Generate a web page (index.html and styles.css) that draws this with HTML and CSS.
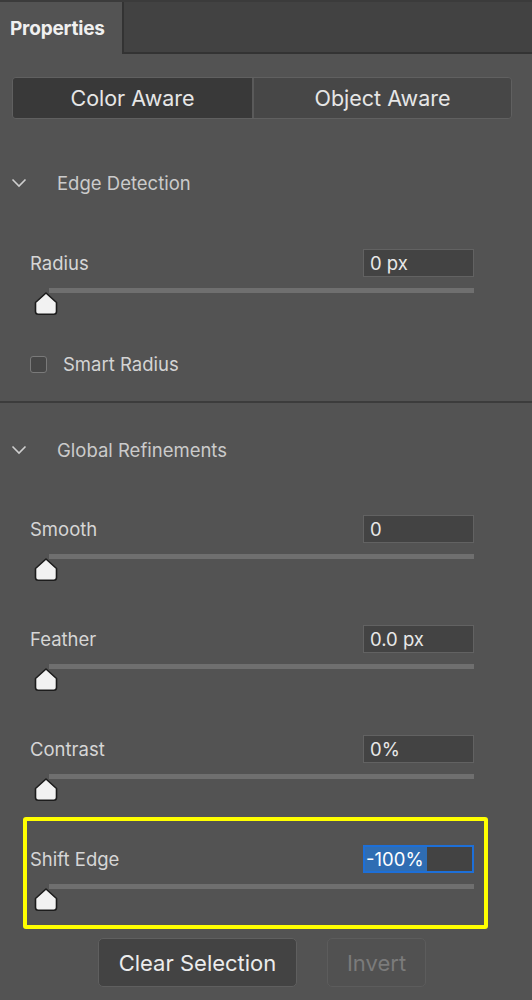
FILE: index.html
```html
<!DOCTYPE html>
<html lang="en">

<head>
  <meta charset="UTF-8" />
  <meta name="viewport" content="width=device-width, initial-scale=1" />
  <title>Properties</title>
  <link rel="stylesheet" href="styles.css">
</head>

<body>
  <div class="tab-bar">
    <div class="tab">Properties</div>
    <div class="tab-rest"></div>
  </div>

  <div class="segmented">
    <button class="segment active">Color Aware</button>
    <button class="segment">Object Aware</button>
  </div>

  <!-- Edge Detection -->
  <div class="section-head section-first">
    <svg class="chevron" width="16" height="10" viewBox="0 0 16 10">
      <path d="M1.5 1.5 L8 8 L14.5 1.5" fill="none" stroke="#cfcfcf" stroke-width="1.6" />
    </svg>
    <span>Edge Detection</span>
  </div>

  <div class="field field-first">
    <div class="field-head">
      <label>Radius</label>
      <div class="value">0 px</div>
    </div>
    <div class="track"></div>
    <svg class="thumb" width="24" height="24" viewBox="0 0 24 24">
      <path d="M12 2 L22.5 11.5 L22.5 20.5 Q22.5 23.2 19.8 23.2 L4.2 23.2 Q1.5 23.2 1.5 20.5 L1.5 11.5 Z" fill="#f2f2f2" stroke="#1c1c1c" stroke-width="1.6" stroke-linejoin="round" />
    </svg>
  </div>

  <div class="check-row">
    <span class="checkbox"></span>
    <span>Smart Radius</span>
  </div>

  <div class="divider"></div>

  <!-- Global Refinements -->
  <div class="section-head">
    <svg class="chevron" width="16" height="10" viewBox="0 0 16 10">
      <path d="M1.5 1.5 L8 8 L14.5 1.5" fill="none" stroke="#cfcfcf" stroke-width="1.6" />
    </svg>
    <span>Global Refinements</span>
  </div>

  <div class="field field-first-global">
    <div class="field-head">
      <label>Smooth</label>
      <div class="value">0</div>
    </div>
    <div class="track"></div>
    <svg class="thumb" width="24" height="24" viewBox="0 0 24 24">
      <path d="M12 2 L22.5 11.5 L22.5 20.5 Q22.5 23.2 19.8 23.2 L4.2 23.2 Q1.5 23.2 1.5 20.5 L1.5 11.5 Z" fill="#f2f2f2" stroke="#1c1c1c" stroke-width="1.6" stroke-linejoin="round" />
    </svg>
  </div>

  <div class="field">
    <div class="field-head">
      <label>Feather</label>
      <div class="value">0.0 px</div>
    </div>
    <div class="track"></div>
    <svg class="thumb" width="24" height="24" viewBox="0 0 24 24">
      <path d="M12 2 L22.5 11.5 L22.5 20.5 Q22.5 23.2 19.8 23.2 L4.2 23.2 Q1.5 23.2 1.5 20.5 L1.5 11.5 Z" fill="#f2f2f2" stroke="#1c1c1c" stroke-width="1.6" stroke-linejoin="round" />
    </svg>
  </div>

  <div class="field">
    <div class="field-head">
      <label>Contrast</label>
      <div class="value">0%</div>
    </div>
    <div class="track"></div>
    <svg class="thumb" width="24" height="24" viewBox="0 0 24 24">
      <path d="M12 2 L22.5 11.5 L22.5 20.5 Q22.5 23.2 19.8 23.2 L4.2 23.2 Q1.5 23.2 1.5 20.5 L1.5 11.5 Z" fill="#f2f2f2" stroke="#1c1c1c" stroke-width="1.6" stroke-linejoin="round" />
    </svg>
  </div>

  <div class="highlight">
    <div class="field field-boxed">
      <div class="field-head">
        <label>Shift Edge</label>
        <div class="value focused"><span class="selected">-100%</span></div>
      </div>
      <div class="track"></div>
      <svg class="thumb" width="24" height="24" viewBox="0 0 24 24">
        <path d="M12 2 L22.5 11.5 L22.5 20.5 Q22.5 23.2 19.8 23.2 L4.2 23.2 Q1.5 23.2 1.5 20.5 L1.5 11.5 Z" fill="#f2f2f2" stroke="#1c1c1c" stroke-width="1.6" stroke-linejoin="round" />
      </svg>
    </div>
  </div>

  <div class="actions">
    <button class="btn btn-clear">Clear Selection</button>
    <button class="btn btn-invert" disabled>Invert</button>
  </div>
</body>

</html>
```

FILE: styles.css
```css
body {
  margin: 0;
  background-color: #535353;
  color: #d4d4d4;
  font-family: Inter, "Open Sans", sans-serif;
  font-size: 18.5px;
  width: 532px;
  height: 1000px;
  overflow: hidden;
}

.tab-bar {
  display: flex;
  height: 52px;
  border-top: 2px solid #3b3b3b;
}

.tab {
  width: 124px;
  padding-left: 10px;
  box-sizing: border-box;
  display: flex;
  align-items: center;
  font-weight: bold;
  font-size: 19px;
  color: #f0f0f0;
  background-color: #535353;
  border-right: 2px solid #333;
  letter-spacing: -0.2px;
}

.tab-rest {
  flex: 1;
  background-color: #424242;
  border-bottom: 2px solid #333;
}

.segmented {
  display: flex;
  margin: 23px 0 0 12px;
  width: 500px;
  height: 42px;
  border: 1px solid #606060;
  border-radius: 4px;
  box-sizing: border-box;
  overflow: hidden;
}

.segment {
  flex: 1;
  border: none;
  background-color: #474747;
  color: #e6e6e6;
  font-family: inherit;
  font-size: 21.5px;
  padding: 0;
}

.segment.active {
  background-color: #393939;
  flex: 0 0 241px;
  border-right: 2px solid #5a5a5a;
}

.section-head {
  display: flex;
  align-items: center;
  height: 40px;
  margin-top: 44px;
  color: #cbcbcb;
}

.chevron {
  margin-left: 11px;
  margin-right: 30px;
}

.divider + .section-head {
  margin-top: 27px;
}

.field {
  margin-top: 44px;
  padding-left: 30px;
  width: 444px;
}

.field-first {
  margin-top: 46px;
}

.field-first-global {
  margin-top: 45px;
}

.field-head {
  display: flex;
  justify-content: space-between;
  align-items: center;
  height: 28px;
}

.field-head label {
  color: #d6d6d6;
}

.value {
  width: 111px;
  height: 28px;
  box-sizing: border-box;
  background-color: #434343;
  border: 1px solid #626262;
  padding-left: 6px;
  display: flex;
  align-items: center;
  color: #e8e8e8;
}

.value.focused {
  border: 2px solid #1d6fd8;
  padding-left: 0;
}

.selected {
  background-color: #2f6db3;
  color: #fff;
  line-height: 24px;
  padding: 0 3px 0 1px;
}

.track {
  margin: 11px 0 0 19px;
  height: 5px;
  background-color: #6f6f6f;
}

.thumb {
  display: block;
  margin-left: 4px;
  margin-top: -2px;
}

.check-row {
  display: flex;
  align-items: center;
  margin-top: 39px;
  padding-left: 30px;
  height: 20px;
}

.checkbox {
  width: 17px;
  height: 17px;
  box-sizing: border-box;
  border: 1.5px solid #7a7a7a;
  border-radius: 3px;
  background-color: #474747;
  margin-right: 16px;
}

.divider {
  margin-top: 27px;
  height: 2px;
  background-color: #3c3c3c;
}

.highlight {
  margin: 16px 0 0 23px;
  width: 465px;
  box-sizing: border-box;
  border: 4px solid #ffff00;
  border-radius: 3px;
  padding: 24px 0 14px 3px;
}

.field.field-boxed {
  margin-top: 0;
  padding-left: 0;
}

.actions {
  display: flex;
  justify-content: center;
  gap: 30px;
  margin-top: 9px;
  padding-right: 8px;
}

.btn {
  height: 49px;
  border-radius: 5px;
  font-family: inherit;
  font-size: 22px;
  padding: 0;
}

.btn-clear {
  width: 199px;
  background-color: #434343;
  border: 1.5px solid #5f5f5f;
  color: #ececec;
}

.btn-invert {
  width: 99px;
  background-color: #515151;
  border: 1.5px solid #5c5c5c;
  color: #7b7b7b;
}
```
